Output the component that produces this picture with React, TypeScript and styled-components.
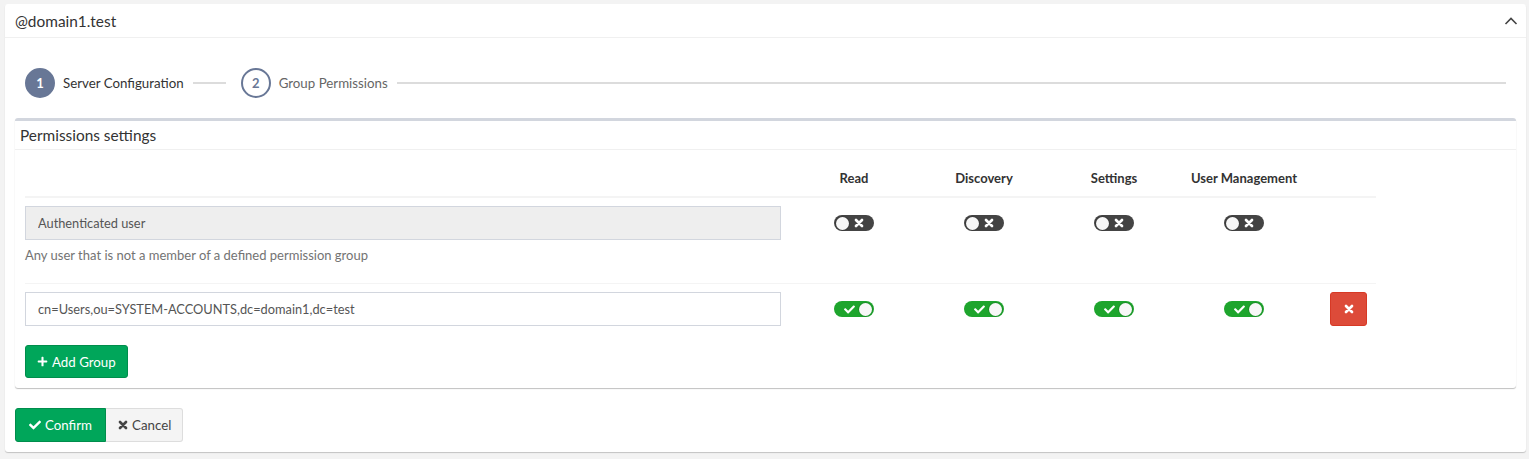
import React from "react";
import styled, { createGlobalStyle } from "styled-components";
import { FaCheck, FaPlus } from "react-icons/fa";

const GlobalStyle = createGlobalStyle`
  html, body { margin: 0; padding: 0; background: #f3f3f3; }
  body {
    font-family: "Source Sans Pro", Lato, "Noto Sans", sans-serif;
    font-size: 13px;
    color: #333;
    padding: 4px 3px 6px 5px;
  }
  * { box-sizing: border-box; }
`;

const Card = styled.div`
  background: #fff;
  border-radius: 3px;
  box-shadow: 0 1px 1px rgba(0, 0, 0, 0.2);
  height: 448px;
`;

const CardHeader = styled.div`
  height: 34px;
  padding: 0 10px;
  display: flex;
  align-items: center;
  justify-content: space-between;
  border-bottom: 1px solid #f0f0f0;
`;

const CardTitle = styled.div`
  font-size: 15.4px;
  color: #333;
`;

const CollapseButton = styled.button`
  border: 0;
  background: transparent;
  padding: 0;
  margin-right: -2px;
  display: flex;
  color: #444;
`;

const CardBody = styled.div`
  padding: 10px;
`;

const Stepper = styled.div`
  display: flex;
  align-items: center;
  margin: 20px 10px 20px 10px;
`;

const Step = styled.div<{ $grow?: boolean }>`
  display: flex;
  align-items: center;
  flex: ${(p) => (p.$grow ? "1" : "none")};
  margin-right: ${(p) => (p.$grow ? "0" : "15px")};
`;

const StepCircle = styled.div<{ $active?: boolean }>`
  width: 30px;
  height: 30px;
  border-radius: 50%;
  display: flex;
  align-items: center;
  justify-content: center;
  font-weight: 700;
  font-size: 13px;
  border: 2px solid #687796;
  background: ${(p) => (p.$active ? "#687796" : "#fff")};
  color: ${(p) => (p.$active ? "#fff" : "#687796")};
`;

const StepLabel = styled.div<{ $active?: boolean }>`
  margin-left: 8px;
  font-size: 13.3px;
  color: ${(p) => (p.$active ? "#333" : "#666")};
  white-space: nowrap;
`;

const StepLine = styled.div<{ $grow?: boolean }>`
  height: 2px;
  background: #dcdcdc;
  margin-left: 9px;
  width: ${(p) => (p.$grow ? "auto" : "33px")};
  flex: ${(p) => (p.$grow ? "1" : "none")};
`;

const Box = styled.div`
  border-top: 3px solid #d2d6de;
  border-radius: 3px;
  background: #fff;
  box-shadow: 0 1px 1px rgba(0, 0, 0, 0.25);
`;

const BoxHeader = styled.div`
  height: 29px;
  padding: 0 5px;
  display: flex;
  align-items: center;
  font-size: 15.4px;
  color: #333;
  border-bottom: 1px solid #f0f0f0;
`;

const BoxBody = styled.div`
  padding: 10px;
`;

const Table = styled.table`
  border-collapse: collapse;
  width: 1351px;
  table-layout: fixed;
  margin-bottom: 11px;
`;

const HeadCell = styled.th<{ $w: number }>`
  width: ${(p) => p.$w}px;
  padding: 8px 0;
  line-height: 20px;
  font-size: 13px;
  font-weight: 700;
  color: #333;
  text-align: center;
  border-bottom: 2px solid #f4f4f4;
`;

const Row = styled.tr<{ $last?: boolean }>`
  border-bottom: ${(p) => (p.$last ? "0" : "1px solid #f4f4f4")};
`;

const Cell = styled.td<{ $pad?: number }>`
  vertical-align: top;
  padding: 8px 0 8px ${(p) => p.$pad ?? 0}px;
`;

const GroupInput = styled.input<{ $readOnlyLook?: boolean }>`
  display: block;
  width: 756px;
  height: 34px;
  padding: 6px 12px;
  font-family: inherit;
  font-size: 12.8px;
  color: #555;
  border: 1px solid #d2d6de;
  border-radius: 0;
  background: ${(p) => (p.$readOnlyLook ? "#eee" : "#fff")};
  outline: none;
`;

const HelpText = styled.div`
  margin: 5px 0 10px;
  line-height: 20px;
  font-size: 13px;
  color: #737373;
`;

const ToggleSlot = styled.div`
  height: 34px;
  display: flex;
  align-items: center;
  justify-content: center;
`;

const Toggle = styled.div<{ $on?: boolean }>`
  width: 40px;
  height: 16px;
  border-radius: 8px;
  background: ${(p) => (p.$on ? "#1ea52d" : "#444")};
  display: flex;
  align-items: center;
  flex-direction: ${(p) => (p.$on ? "row-reverse" : "row")};
  padding: 0 2px;
  gap: 4px;
  color: #fff;
`;

const Knob = styled.div`
  width: 13px;
  height: 13px;
  border-radius: 50%;
  background: #f7f7f7;
  box-shadow: 0 0 0 1px rgba(0, 0, 0, 0.12);
`;

const ToggleIcon = styled.span<{ $on?: boolean }>`
  display: flex;
  margin-left: ${(p) => (p.$on ? "3px" : "1px")};
`;

const Btn = styled.button<{ $variant: "success" | "danger" | "default" }>`
  display: inline-flex;
  align-items: center;
  justify-content: center;
  gap: 4px;
  height: 34px;
  padding: 6px 12px;
  font-family: inherit;
  font-size: 13.3px;
  border-radius: 3px;
  cursor: pointer;
  background: ${(p) =>
    p.$variant === "success" ? "#00a65a" : p.$variant === "danger" ? "#dd4b39" : "#f4f4f4"};
  color: ${(p) => (p.$variant === "default" ? "#444" : "#fff")};
  border: 1px solid
    ${(p) =>
      p.$variant === "success" ? "#008d4c" : p.$variant === "danger" ? "#d73925" : "#ddd"};
`;

const DeleteBtn = styled(Btn)`
  width: 37px;
  padding: 0;
`;

const AddBtn = styled(Btn)`
  height: 33px;
  padding: 6px 11px;
`;

const BtnGroup = styled.div`
  display: flex;
  margin-top: 20px;
  & > button:first-child {
    border-top-right-radius: 0;
    border-bottom-right-radius: 0;
    padding: 6px 13px;
  }
  & > button:last-child {
    border-top-left-radius: 0;
    border-bottom-left-radius: 0;
    border-left: 0;
    padding: 6px 11px 6px 12px;
  }
`;

const BoldX: React.FC<{ size?: number; color?: string }> = ({ size = 10, color = "currentColor" }) => (
  <svg width={size} height={size} viewBox="0 0 10 10" aria-hidden>
    <path
      d="M2 2 L8 8 M8 2 L2 8"
      stroke={color}
      strokeWidth="2.7"
      strokeLinecap="round"
      fill="none"
    />
  </svg>
);

const SwitchCell: React.FC<{ on?: boolean }> = ({ on }) => (
  <Cell>
    <ToggleSlot>
      <Toggle $on={on}>
        <Knob />
        <ToggleIcon $on={on}>{on ? <FaCheck size={11} /> : <BoldX size={10} />}</ToggleIcon>
      </Toggle>
    </ToggleSlot>
  </Cell>
);

const columns = ["Read", "Discovery", "Settings", "User Management"];

export default function App() {
  return (
    <>
      <GlobalStyle />
      <Card>
        <CardHeader>
          <CardTitle>@domain1.test</CardTitle>
          <CollapseButton aria-label="collapse">
            <svg width="14" height="10" viewBox="0 0 14 10">
              <polyline points="1.5,8 7,2.5 12.5,8" fill="none" stroke="#444" strokeWidth="1.6" />
            </svg>
          </CollapseButton>
        </CardHeader>
        <CardBody>
          <Stepper>
            <Step>
              <StepCircle $active>1</StepCircle>
              <StepLabel $active>Server Configuration</StepLabel>
              <StepLine />
            </Step>
            <Step $grow>
              <StepCircle>2</StepCircle>
              <StepLabel>Group Permissions</StepLabel>
              <StepLine $grow />
            </Step>
          </Stepper>
          <Box>
            <BoxHeader>Permissions settings</BoxHeader>
            <BoxBody>
              <Table>
                <thead>
                  <tr>
                    <HeadCell $w={764} />
                    {columns.map((c) => (
                      <HeadCell key={c} $w={130}>
                        {c}
                      </HeadCell>
                    ))}
                    <HeadCell $w={67} />
                  </tr>
                </thead>
                <tbody>
                  <Row>
                    <Cell>
                      <GroupInput $readOnlyLook readOnly value="Authenticated user" />
                      <HelpText>Any user that is not a member of a defined permission group</HelpText>
                    </Cell>
                    {columns.map((c) => (
                      <SwitchCell key={c} />
                    ))}
                    <Cell />
                  </Row>
                  <Row $last>
                    <Cell>
                      <GroupInput readOnly value="cn=Users,ou=SYSTEM-ACCOUNTS,dc=domain1,dc=test" />
                    </Cell>
                    {columns.map((c) => (
                      <SwitchCell key={c} on />
                    ))}
                    <Cell $pad={21}>
                      <DeleteBtn $variant="danger" aria-label="remove">
                        <BoldX size={10} />
                      </DeleteBtn>
                    </Cell>
                  </Row>
                </tbody>
              </Table>
              <AddBtn $variant="success">
                <FaPlus size={11} />
                Add Group
              </AddBtn>
            </BoxBody>
          </Box>
          <BtnGroup>
            <Btn $variant="success">
              <FaCheck size={12} />
              Confirm
            </Btn>
            <Btn $variant="default">
              <BoldX size={10} />
              Cancel
            </Btn>
          </BtnGroup>
        </CardBody>
      </Card>
    </>
  );
}
